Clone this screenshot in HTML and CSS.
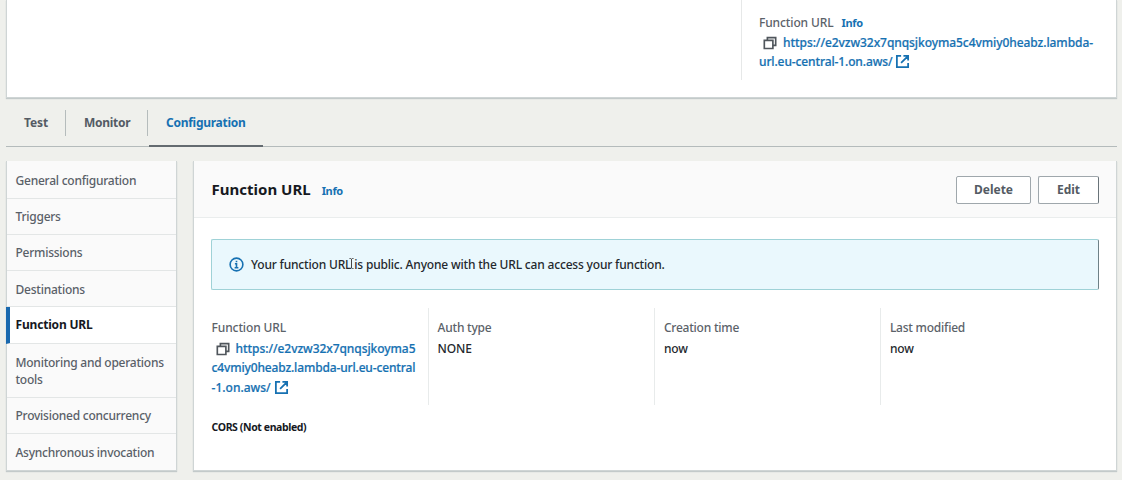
FILE: index.html
```html
<!DOCTYPE html>
<html lang="en">
<head>
<meta charset="utf-8">
<title>Function URL configuration</title>
<link rel="stylesheet" href="styles.css">
</head>
<body>
<svg class="defs" aria-hidden="true">
  <symbol id="copy" viewBox="0 0 16 16"><path d="M1.5 5h9.8v9.3H1.5zM5 5V1.8h9.5v9h-3.2" /></symbol>
  <symbol id="external" viewBox="0 0 16 16"><path d="M6.5 2H2v12h12V9.5M9 2h5v5M13.5 2.5l-7 7" /></symbol>
  <symbol id="info" viewBox="0 0 16 16"><circle cx="8" cy="8" r="6.8"/><path d="M6.3 7.2H8v4M6 11.4h4M8 4v1.5"/></symbol>
</svg>
<section class="card overview">
  <div class="overview-url">
    <div class="label">Function URL <a class="info">Info</a></div>
    <div class="link top-first"><svg class="icon copy"><use href="#copy"/></svg><a>https://e2vzw32x7qnqsjkoyma5c4vmiy0heabz.lambda-</a></div>
    <div class="link top-second"><a>url.eu-central-1.on.aws/</a><svg class="icon external"><use href="#external"/></svg></div>
  </div>
</section>
<nav class="tabs">
  <a class="tab test"><span>Test</span></a>
  <a class="tab monitor"><span>Monitor</span></a>
  <a class="tab active"><span>Configuration</span></a>
</nav>
<div class="content">
  <aside class="card sidebar">
    <a class="item">General configuration</a>
    <a class="item">Triggers</a>
    <a class="item">Permissions</a>
    <a class="item">Destinations</a>
    <a class="item selected">Function URL</a>
    <a class="item tall">Monitoring and operations<br>tools</a>
    <a class="item">Provisioned concurrency</a>
    <a class="item">Asynchronous invocation</a>
  </aside>
  <main class="card panel">
    <header class="panel-header">
      <h2>Function URL</h2><a class="info">Info</a>
      <div class="actions"><button class="delete">Delete</button><button class="edit">Edit</button></div>
    </header>
    <div class="alert">
      <svg class="icon info-icon"><use href="#info"/></svg>
      <span class="alert-text">Your function URL<svg class="cursor" viewBox="0 0 5 11"><path d="M.5.5h1.2l.8.7.8-.7h1.2M2.5 1v9M.5 10.5h1.2l.8-.7.8.7h1.2"/></svg> is public. Anyone with the URL can access your function.</span>
    </div>
    <div class="details">
      <div class="detail">
        <div class="label">Function URL</div>
        <div class="link"><svg class="icon copy"><use href="#copy"/></svg><a>https://e2vzw32x7qnqsjkoyma5</a></div>
        <div class="link middle"><a>c4vmiy0heabz.lambda-url.eu-central</a></div>
        <div class="link last"><a>-1.on.aws/</a><svg class="icon external"><use href="#external"/></svg></div>
      </div>
      <div class="detail"><div class="label">Auth type</div><div class="value">NONE</div></div>
      <div class="detail"><div class="label">Creation time</div><div class="value">now</div></div>
      <div class="detail"><div class="label">Last modified</div><div class="value">now</div></div>
    </div>
    <h3 class="cors">CORS (Not enabled)</h3>
  </main>
</div>
</body>
</html>
```
FILE: styles.css
```css
* { box-sizing: border-box; }
body {
  margin: 0;
  height: 480px;
  overflow: hidden;
  padding: 0 5px 0 6px;
  background: #eff0ec;
  color: #24282d;
  font: 500 12px/19px "Noto Sans", "Open Sans", sans-serif;
}
.defs { position: absolute; width: 0; height: 0; }
.icon { flex: none; fill: none; stroke: currentColor; stroke-width: 1.9; }
.card {
  background: #fff;
  border: 1px solid #cfd5d5;
  border-top: 0;
  box-shadow: 0 1px 1px #c3caca;
}
.overview { height: 98px; display: flex; justify-content: flex-end; }
.overview-url {
  width: 375px;
  height: 80px;
  padding: 13px 0 0 17px;
  border-left: 1px solid #e6e8e8;
}
.label { color: #5b6269; height: 21px; line-height: 19px; letter-spacing: -.12px; white-space: nowrap; }
.info { color: #1671b2; font-size: 11px; font-weight: 700; letter-spacing: -.35px; }
.label .info { margin-left: 5px; }
.link { display: flex; align-items: center; height: 19.3px; color: #1671b2; letter-spacing: -.07px; white-space: nowrap; }
.link a { -webkit-text-stroke: .2px currentColor; }
.middle { letter-spacing: -.15px; }
.copy { width: 14px; height: 14px; margin: 0 6px 0 4px; color: #50565c; }
.external { width: 15px; height: 15px; margin-left: 3px; }
.top-first { letter-spacing: -.07px; margin-top: -1px; }
.top-second { letter-spacing: -.12px; }
.last { letter-spacing: 0; }

.tabs {
  display: flex;
  height: 49px;
  padding-top: 12px;
  border-bottom: 1px solid #b4bbbb;
  color: #545b64;
  font-size: 12px;
  font-weight: 700;
  letter-spacing: -.27px;
}
.tab { display: flex; height: 37px; }
.tab span { height: 26px; line-height: 25px; white-space: nowrap; }
.test { width: 60px; padding-left: 18px; }
.monitor { width: 82px; padding-left: 18px; }
.test span, .monitor span { flex: 1; border-right: 1px solid #b5bcbc; }
.test span { letter-spacing: -.1px; }
.active { width: 114px; margin-left: 1px; padding-left: 17px; color: #1671b2; border-bottom: 2px solid #646b70; }
.content { display: flex; align-items: flex-start; gap: 16px; padding-top: 14px; }
.sidebar { width: 171px; height: 310px; background: #fafafa; }
.item {
  display: block;
  height: 36.3px;
  padding: 9.5px 0 0 8.5px;
  line-height: 18px;
  color: #596068;
  letter-spacing: -.24px;
  border-bottom: 1px solid #e3e6e6;
  white-space: nowrap;
}
.item:first-child { height: 37.6px; padding-top: 11px; }
.item:last-child { border-bottom: 0; }
.item.selected { padding-top: 9px; padding-left: 5.5px; margin-left: -1px; border-left: 4px solid #1968ae; background: #fff; color: #16191f; font-weight: 700; letter-spacing: -.18px; }
.item.tall { height: 54px; padding-top: 10px; line-height: 17px; }

.panel { flex: 1; height: 310px; }
.panel-header {
  display: flex;
  align-items: center;
  height: 57px;
  padding: 0 17px 0 17.6px;
  background: #fafafa;
  border-bottom: 1px solid #eaeded;
}
h2 { margin: 0 11px 0 0; color: #16191f; font-size: 15px; font-weight: 700; line-height: 24px; white-space: nowrap; }
.panel-header .info { padding-top: 3px; }
.actions { display: flex; gap: 7px; margin: 1px 0 0 auto; }
button {
  height: 28px;
  padding: 0;
  background: #fff;
  border: 1px solid #9fa7ac;
  border-radius: 2px;
  color: #545b64;
  font: 700 12px/20px "Noto Sans", sans-serif;
}
.delete { width: 75px; }
.edit { width: 61px; border-right-color: #697379; }
.alert {
  display: flex;
  align-items: center;
  height: 51px;
  margin: 21px 17px 0;
  padding-left: 17px;
  background: #eaf8fd;
  border: 1px solid #9fd2d7;
  border-right-color: #6e8187;
  border-radius: 2px;
}
.info-icon { width: 15px; height: 15px; margin-right: 7px; color: #1671b2; stroke-width: 1.7; }
.alert-text { letter-spacing: -.18px; white-space: nowrap; }
.cursor { width: 5px; height: 11px; margin: 0 -3px 0 -2px; fill: none; stroke: #444; stroke-width: 1; vertical-align: 0; }
.details { display: grid; grid-template-columns: 216.4px 226.3px 226px 218px; height: 97px; margin: 18px 17px 0 17.6px; }
.detail { padding: 10px 0 0 8.6px; border-left: 1px solid #e8ebeb; }
.detail:first-child { padding-left: 0; border-left: 0; }
.detail:not(:first-child) .label { letter-spacing: -.22px; }
.value { height: 19px; letter-spacing: -.15px; }
.cors { margin: 13px 17px 0 17.6px; color: #16191f; font-size: 10.5px; font-weight: 700; letter-spacing: -.4px; line-height: 18px; }
```
